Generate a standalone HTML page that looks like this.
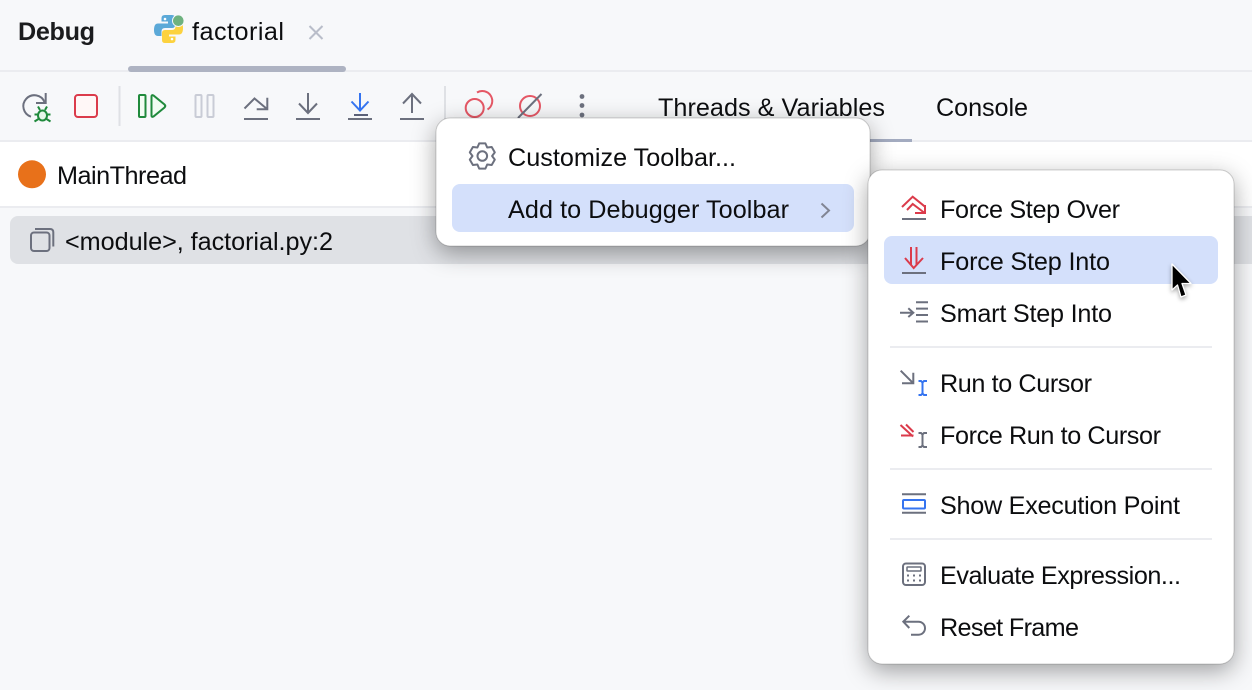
<!DOCTYPE html>
<html>
<head>
<meta charset="utf-8">
<style>
html,body{margin:0;padding:0;background:#f7f8fa;width:1252px;height:690px;overflow:hidden}
svg{display:block;position:absolute;left:0;top:0}
text{font-family:"Liberation Sans",sans-serif;font-size:25.2px;fill:#0c0d0f}
.g{fill:none;stroke:#6c707e;stroke-width:2}
.r{fill:none;stroke:#db3b4b;stroke-width:2}
.b{fill:none;stroke:#3574f0;stroke-width:2}
</style>
</head>
<body>
<svg width="1252" height="690" viewBox="0 0 1252 690" xmlns="http://www.w3.org/2000/svg">
<defs>
<filter id="sh" x="-25%" y="-25%" width="150%" height="150%">
<feDropShadow dx="0" dy="7" stdDeviation="12" flood-color="#000" flood-opacity=".36"/>
</filter>
</defs>

<rect width="1252" height="690" fill="#f7f8fa"/>
<rect x="0" y="70" width="1252" height="2" fill="#ebecf0"/>
<rect x="128" y="66" width="218" height="6" rx="3" fill="#aeb3c2"/>
<rect x="0" y="140" width="1252" height="2" fill="#ebecf0"/>
<rect x="640" y="139" width="272" height="3" fill="#a3abc0"/>
<rect x="0" y="142" width="1252" height="64" fill="#fff"/>
<rect x="0" y="206" width="1252" height="2" fill="#ebecf0"/>
<rect x="10" y="216" width="1260" height="48" rx="8" fill="#dfe1e5"/>

<text x="18" y="40" font-weight="700" textLength="77" lengthAdjust="spacing" style="fill:#1b1c1e">Debug</text>
<text x="192" y="40" textLength="92" lengthAdjust="spacing">factorial</text>
<text x="658" y="116" textLength="227" lengthAdjust="spacing">Threads &amp; Variables</text>
<text x="936" y="116" textLength="92" lengthAdjust="spacing">Console</text>
<text x="57" y="184" textLength="130" lengthAdjust="spacing">MainThread</text>
<text x="65" y="250" textLength="268" lengthAdjust="spacing">&lt;module&gt;, factorial.py:2</text>

<!-- python -->
<g>
<path d="M165 15H172Q175 15 175 18V25Q175 28 172 28H165Q161.500 28 161.500 31.500V36H158Q154 36 154 30Q154 23.500 158 23.500H168V21.500H161.500V18Q161.500 15 165 15Z" fill="#5ba9d8"/>
<path d="M165 15H172Q175 15 175 18V25Q175 28 172 28H165Q161.500 28 161.500 31.500V36H158Q154 36 154 30Q154 23.500 158 23.500H168V21.500H161.500V18Q161.500 15 165 15Z" fill="#fcd23f" transform="translate(337 58) scale(-1 -1)"/>
<circle cx="165" cy="19" r="1.300" fill="#fff"/>
<circle cx="172" cy="39" r="1.300" fill="#fff"/>
<circle cx="178.300" cy="20.700" r="5.800" fill="#6eb27f" stroke="#f7f8fa" stroke-width="1"/>
</g>
<path d="M309.500 26L322.500 39M322.500 26L309.500 39" stroke="#b9bdc9" stroke-width="2" fill="none"/>

<!-- toolbar -->
<path class="g" d="M31 116.700A11 11 0 1 1 44.500 102"/>
<path class="g" d="M45.700 93V103H36"/>
<g fill="none" stroke="#208a3c" stroke-width="2">
<ellipse cx="42.500" cy="115.500" rx="4.500" ry="5" fill="#e6f7e9"/>
<path d="M38 106.500L40 110M47 106.500L45 110M34.500 114.500H38M47 114.500H50.500M34.500 121.500L38.500 119M50.500 121.500L46.500 119"/>
</g>
<rect x="75" y="95" width="22" height="22" rx="3" fill="#fff7f7" stroke="#db3b4b" stroke-width="2"/>
<rect x="118.500" y="86" width="2" height="40" fill="#dfe1e5"/>
<rect x="139" y="95" width="6.500" height="22" rx="1" fill="#f2fcf3" stroke="#208a3c" stroke-width="2"/>
<path d="M151.500 96.500Q151.500 94.500 153.500 95.500L164.500 104.500Q166 106 164.500 107.500L153.500 116.500Q151.500 117.500 151.500 115.500Z" fill="#f2fcf3" stroke="#208a3c" stroke-width="2"/>
<rect x="195.500" y="95" width="6" height="22" rx="1" fill="none" stroke="#c9ccd6" stroke-width="2"/>
<rect x="207.500" y="95" width="6" height="22" rx="1" fill="none" stroke="#c9ccd6" stroke-width="2"/>

<path class="g" d="M244.500 108.500L254.500 98.500L267 109M267.300 97.700V109.200H256.700M244 119H268"/>
<path class="g" d="M308 93V113M299 103.500L308 113L317 103.500M296 119H320"/>
<path class="b" d="M360 93V110.500M351.500 101.500L360 110.500L368.500 101.500"/>
<path d="M354 115H368" stroke="#5b6178" stroke-width="2"/>
<path class="g" d="M348 119H372"/>
<path class="g" d="M412 94V113M403 103.500L412 94L421 103.500M400 119H424"/>
<rect x="444" y="86" width="2" height="40" fill="#dfe1e5"/>

<circle cx="474.700" cy="108" r="9" fill="none" stroke="#e55765" stroke-width="2"/>
<path d="M477 92.500A9.500 9.500 0 1 1 487.500 109.500" fill="none" stroke="#e55765" stroke-width="2"/>
<circle cx="530" cy="106" r="10" fill="none" stroke="#e55765" stroke-width="2"/>
<path class="g" d="M518 118L541.500 94"/>
<circle cx="582" cy="96.500" r="2.400" fill="#6c707e"/>
<circle cx="582" cy="105.500" r="2.400" fill="#6c707e"/>
<circle cx="582" cy="115" r="2.400" fill="#6c707e"/>

<!-- thread -->
<circle cx="32" cy="174.300" r="14" fill="#e8711a"/>
<rect x="31" y="232.500" width="18.500" height="18.500" rx="3" fill="none" stroke="#6c707e" stroke-width="2"/>
<path class="g" d="M35 229H50Q53.300 229 53.300 232.300V246.500"/>

<!-- menu 1 -->
<rect x="436" y="118" width="434" height="128" rx="14" fill="#fff" stroke="#000" stroke-opacity=".18" filter="url(#sh)"/>
<rect x="452" y="184" width="402" height="48" rx="8" fill="#d4e0fb"/>
<g transform="translate(482.300 156)">
<path class="g" d="M-3.100 -12.600L3.100 -12.600L4.900 -8.500L9.400 -9L12.500 -3.600L9.800 0L12.500 3.600L9.400 9L4.900 8.500L3.100 12.600L-3.100 12.600L-4.900 8.500L-9.400 9L-12.500 3.600L-9.800 0L-12.500 -3.600L-9.400 -9L-4.900 -8.500Z" stroke-linejoin="round"/>
<circle r="4.800" class="g"/>
</g>
<text x="508" y="166" textLength="228" lengthAdjust="spacing">Customize Toolbar...</text>
<text x="508" y="218" textLength="281" lengthAdjust="spacing">Add to Debugger Toolbar</text>
<path d="M821.500 203.500L829 210.500L821.500 217.500" fill="none" stroke="#818594" stroke-width="2"/>

<!-- menu 2 -->
<rect x="868" y="170" width="366" height="494" rx="14" fill="#fff" stroke="#000" stroke-opacity=".18" filter="url(#sh)"/>
<rect x="884" y="236" width="334" height="48" rx="8" fill="#d4e0fb"/>
<rect x="890" y="346" width="322" height="2" fill="#ebecf0"/>
<rect x="890" y="468" width="322" height="2" fill="#ebecf0"/>
<rect x="890" y="538" width="322" height="2" fill="#ebecf0"/>

<text x="940" y="218" textLength="180" lengthAdjust="spacing">Force Step Over</text>
<text x="940" y="270" textLength="170" lengthAdjust="spacing">Force Step Into</text>
<text x="940" y="322" textLength="172" lengthAdjust="spacing">Smart Step Into</text>
<text x="940" y="392" textLength="152" lengthAdjust="spacing">Run to Cursor</text>
<text x="940" y="444" textLength="221" lengthAdjust="spacing">Force Run to Cursor</text>
<text x="940" y="514" textLength="240" lengthAdjust="spacing">Show Execution Point</text>
<text x="940" y="584" textLength="241" lengthAdjust="spacing">Evaluate Expression...</text>
<text x="940" y="636" textLength="139" lengthAdjust="spacing">Reset Frame</text>

<!-- force step over -->
<path class="r" d="M902 207L912.700 196.700L925 206.700M907 210L912.700 204L924 212.500M925 205V213H915"/>
<path class="g" d="M902 219H926"/>
<!-- force step into -->
<path class="r" d="M911 247V265M916.500 247V265M905 258L913.700 268L923 258"/>
<path class="g" d="M902 273H926"/>
<!-- smart step into -->
<path class="g" d="M900 312.700H913M908.300 308.300L913.300 312.700L908.300 317M916 302.300H928M916 308.600H928M916 315H928M916 321.500H928"/>
<!-- run to cursor -->
<path class="g" d="M900.700 370.700L913 383M913.300 372.700V383.300H902"/>
<path class="b" d="M918.500 381H921L922.500 382.500L924 381H927M922.500 382.500V393M918.500 395H921L922.500 393.500L924 395H927" stroke-width="1.700"/>
<!-- force run to cursor -->
<path class="r" d="M900.500 425L913 436.500M906 424.500L913.500 432M901 435.500H913.500"/>
<path class="g" d="M918.500 433H921L922.500 434.500L924 433H927M922.500 434.500V445M918.500 447H921L922.500 445.500L924 447H927" stroke-width="1.700"/>
<!-- show exec -->
<path class="g" d="M902 494.300H926M902 512.700H926"/>
<rect x="903" y="500" width="22" height="8.500" rx="1" fill="none" stroke="#3574f0" stroke-width="2"/>
<!-- evaluate -->
<rect x="903" y="563.500" width="22" height="21.500" rx="3" fill="none" stroke="#6c707e" stroke-width="2"/>
<rect x="907" y="567" width="14" height="4" rx=".5" fill="none" stroke="#6c707e" stroke-width="1.500"/>
<g fill="#6c707e">
<rect x="907" y="574.500" width="2" height="2"/><rect x="913" y="574.500" width="2" height="2"/><rect x="919" y="574.500" width="2" height="2"/>
<rect x="907" y="579.500" width="2" height="2"/><rect x="913" y="579.500" width="2" height="2"/><rect x="919" y="579.500" width="2" height="2"/>
</g>
<!-- reset -->
<path class="g" d="M903.500 621.700H918.500A6.500 6.500 0 0 1 918.500 634.700H911M909.300 615.700L903.300 621.700L909.300 628"/>

<!-- cursor -->
<path d="M1172 264V290L1177.500 285L1181 297L1186 295L1182 283.500H1191Z" fill="#000" stroke="#fff" stroke-width="1.300" stroke-linejoin="round" style="filter:drop-shadow(0 2px 2px rgba(0,0,0,.35))"/>
</svg>
</body>
</html>
